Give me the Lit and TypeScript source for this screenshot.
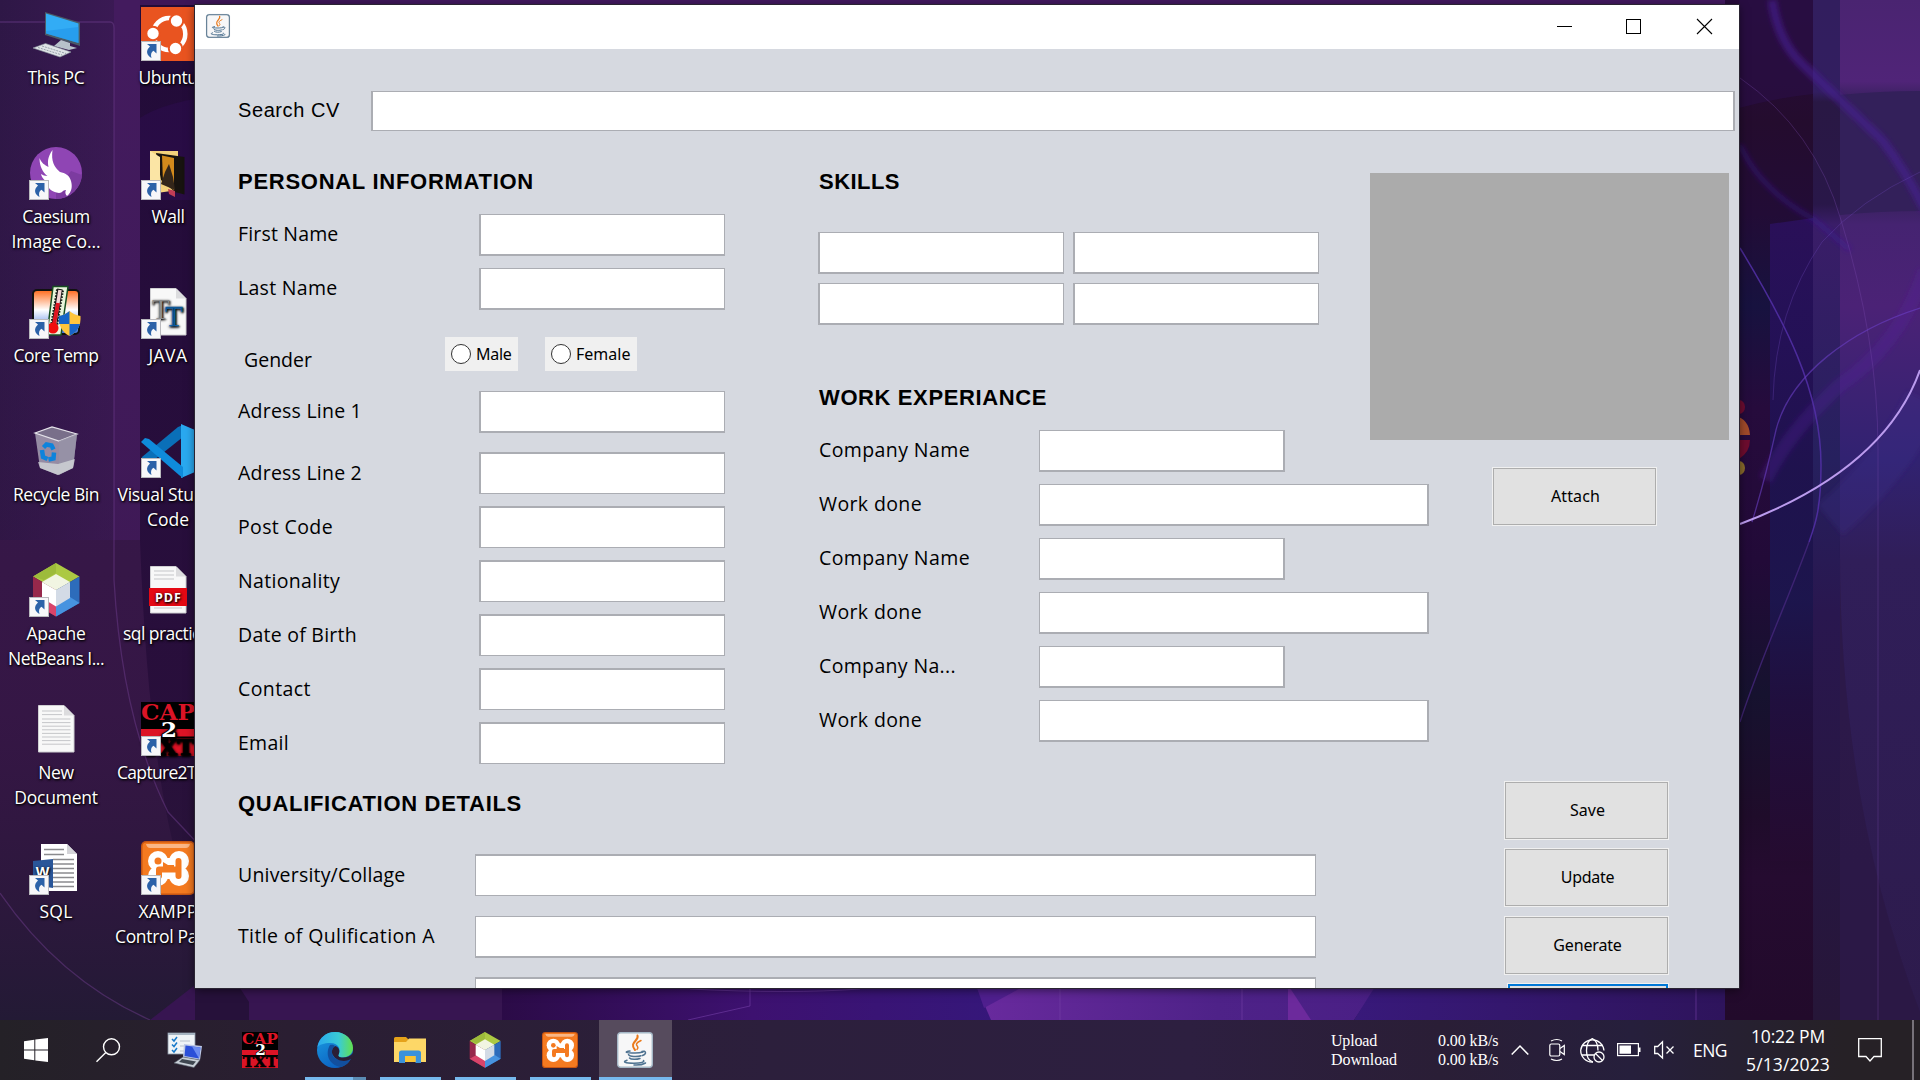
import { LitElement, html, css, svg, nothing, type TemplateResult } from "lit";
import { customElement, property } from "lit/decorators.js";

/** A run of text whose letter spacing is adjusted to reach a given advance width. */
@customElement("fit-text")
class FitText extends LitElement {
  @property() text = "";
  @property({ type: Number }) w = 0;
  static styles = css`
    :host { display: inline-block; white-space: pre; }
  `;
  render() {
    return html`${this.text}`;
  }
  updated() {
    if (!this.w) return;
    this.style.letterSpacing = "0px";
    const width = this.getBoundingClientRect().width;
    this.style.letterSpacing = `${((this.w - width) / this.text.length).toFixed(3)}px`;
  }
}

const t = (text: string, w = 0) => html`<fit-text .text=${text} .w=${w}></fit-text>`;

/* ---------- icons ---------- */
const badge = svg`<g><rect x=".5" y="34.5" width="19" height="19" fill="#f7f7f9" stroke="#b9b9bd"/>
  <path d="M6 37h9.500v9.500l-3-2.800c-2.500 1.500-3 4-2 7.300-4.500-2.500-6.500-7-1.500-11.500z" fill="#2c62a8"/></g>`;

const cube = svg`<path d="M27 0 50.500 13.500 27 27 4 13.500z" fill="#acc943"/><path d="M27 0v10L15 17 4 13.500z" fill="#9dbb3b"/>
  <path d="M4 13.500 27 27V53.500L4 40z" fill="#97284b"/><path d="M4 40l11-6 12 6.500v13z" fill="#d8446a"/>
  <path d="M50.500 13.500 27 27V53.500L50.500 40z" fill="#2d6cbb"/><path d="M50.500 40 41 34l-14 6.500v13z" fill="#4793e0"/>
  <path d="M27 11 41 19 27 27 13 19z" fill="#f1f5e2"/><path d="M13 19 27 27V43.500L13 35z" fill="#fff"/><path d="M41 19 27 27V43.500L41 35z" fill="#d3dbe6"/>`;

const cap = svg`<rect width="54" height="54" fill="#000"/><rect y="27" width="54" height="7.500" fill="#dc1426"/><rect y="36" width="54" height="18" fill="#dc1426"/>
  <g font-family="'DejaVu Serif'" font-weight="700" text-anchor="middle"><text x="27" y="17.500" font-size="23" textLength="54" lengthAdjust="spacingAndGlyphs" fill="#dc1426">CAP</text>
  <text x="27" y="53" font-size="22" textLength="52" lengthAdjust="spacingAndGlyphs" fill="#000" stroke="#000" stroke-width=".8">TXT</text>
  <text x="28" y="34.500" font-size="21" textLength="16" lengthAdjust="spacingAndGlyphs" fill="#fff" stroke="#000" stroke-width="2" paint-order="stroke">2</text></g>`;

const xampp = svg`<rect width="54" height="54" rx="5" fill="#c65513"/><rect x="1.500" y="1.500" width="51" height="51" rx="4" fill="#f47a20"/>
  <path d="M5 3h44q-1 4-4 4H9Q6 7 5 3z" fill="#fbc6a0" opacity=".8"/>
  <g fill="#fff"><circle cx="17" cy="20" r="10"/><circle cx="38" cy="20" r="10"/><circle cx="17" cy="35" r="10"/><circle cx="38" cy="35" r="10"/><rect x="14" y="17" width="27" height="21"/></g>
  <circle cx="17" cy="20" r="3.500" fill="#f47a20"/><path d="M18 35V28.500H37.500V20M37.500 35V28.500" fill="none" stroke="#f47a20" stroke-width="6" stroke-linecap="round" stroke-linejoin="round"/><path d="M22 21l5 3h6v3H22z" fill="#f47a20"/>`;

const java = svg`<rect x=".7" y=".7" width="34.600" height="34.600" rx="3" fill="#f7f7f8" stroke="#a4b7c6" stroke-width="1.400"/>
  <g fill="none" stroke-linecap="round"><path d="M20.500 3.500c2 5-9 7-2.500 14.500" stroke="#ea7a1c" stroke-width="2"/><path d="M24 8.500c-5 2.500-5.500 4-3.500 6 .8 1.200.3 2.300-.5 3" stroke="#ea7a1c" stroke-width="1.500"/>
  <g stroke="#4f7391" stroke-width="1.500"><path d="M13 19c-6 .8-5 2 5 2 4 0 6-.4 8-1"/><path d="M25 19.500c4-1.500 5 2.500.5 4"/><path d="M11.500 22.500c1 2.500 9 2.500 12.500 1.200"/><path d="M12.500 26c1.500 1.700 7 1.700 10.500.5"/><path d="M10 28.200c-5 1.500-2 3 7 3 7 0 11-1.200 9.500-2.700"/><path d="M17 33c5 .3 9-.5 11.500-2"/></g></g>`;

const doc = (inner: unknown) => svg`<path d="M9.500 3.500H35l10 10V50H9.500z" fill="#f8f8f8" stroke="#cfcfd2"/><path d="M35 3.500V13.500H45z" fill="#dcdcde"/>${inner}`;
const lines = (x1: number, x2: number, y: number, n: number, step: number) =>
  svg`<path d=${Array.from({ length: n }, (_, i) => `M${x1} ${y + i * step}H${x2}`).join("")} stroke="#c5c6c9" stroke-width="1"/>`;

const art: Record<string, TemplateResult> = {
  pc: svg`<path d="M16 5 51 15.500V39L16 28z" fill="#4a5a67"/><path d="M17 6.500 49.500 16.500V36L17 26.500z" fill="#32acf5"/><path d="M17 24 49.500 20v16L17 26.500z" fill="#1b8fe8" opacity=".5"/><path d="M32 33l9 3v3l7 2-8 2-15-4z" fill="#b7c2ca"/>
    <path d="M4 41 16.500 36.500 42 45 31 50z" fill="#dfe3e6" stroke="#8b979f" stroke-width=".6"/><path d="M9 40.500 33 48M13 39 37 46.500" stroke="#96a1a9" stroke-width="1" stroke-dasharray="2 1"/>`,
  ubuntu: svg`<rect width="60" height="54" fill="#e95420"/><circle cx="28.300" cy="27" r="16" fill="none" stroke="#fff" stroke-width="4.500"/><g fill="#fff" stroke="#e95420" stroke-width="2"><circle cx="35.500" cy="14" r="6.700"/><circle cx="12" cy="26.500" r="6.700"/><circle cx="34.500" cy="41.500" r="6.700"/></g>`,
  caesium: svg`<circle cx="27" cy="27" r="26" fill="#8f45b4"/><path d="M27 53a26 26 0 0 0 26-24L42 25 27 45z" fill="#7c3ba0"/><path d="M23.500 4c-5 7-5 12-4 17-4-2-7-4-9-9 0 8 3 14 8 18-3 0-4.500-1-6.500-2 1 5 5 7 8 9-3 5 3 9 10 10 4 0 3-3 7-3-1 2-1 4 1 6 5-4 5.500-10 4-15-1.500-6-6-8-11-9-6-5-9-11-7.500-22z" fill="#fff"/>`,
  wall: svg`<path d="M9 5H37V44L9 48z" fill="#f4d27c"/><path d="M15 7 43.500 11V48.500L34 46 20 34z" fill="#17130f"/><path d="M21 9.500 33 12v32l-11-8z" fill="#d28a1c"/><path d="M28 18l4 13 2 13-14-6 4-12z" fill="#33261a"/><path d="M27 43l7 2v6l-6-3z" fill="#c13d56"/><path d="M9 5 19 11V34L9 48z" fill="#fbe5a5"/>`,
  temp: svg`<defs><linearGradient id="ct" x2="0" y2="1"><stop stop-color="#ff6a1b"/><stop offset=".45" stop-color="#fff"/><stop offset="1" stop-color="#3b6fe0"/></linearGradient></defs>
    <rect x="4" y="5" width="46" height="44" rx="4" fill="url(#ct)" stroke="#111" stroke-width="2"/><path d="M24 1.500H39L32 50H18z" fill="#e9f5dc" stroke="#174f22" stroke-width="1.500"/><path d="M31 5 25 41" stroke="#111" stroke-width="8" stroke-dasharray="1.500 1.500"/><path d="M31 4 25 42" stroke="#111" stroke-width="5.500"/><path d="M31 5 25 42" stroke="#f2d5d5" stroke-width="3.500"/><path d="M29 18 24.500 42" stroke="#e01520" stroke-width="4"/><circle cx="24" cy="43" r="5.500" fill="#f00d0d"/>
    <path d="M30 31q6-1 10.500-5Q45 30 51.500 31q1 14-11 20Q29 45 30 31z" fill="#ffc53b"/><path d="M40.500 26v13H30q-1-4 0-8 6-1 10.500-5zM40.500 39H51q-2 8-10.500 12z" fill="#1765c8"/>`,
  font: doc(svg`<g font-family="'Liberation Serif'" font-size="29"><text x="11" y="34" fill="#8d8d8d">T</text><text x="24" y="41" fill="#1273c4" stroke="#1273c4" stroke-width=".5">T</text></g>`),
  bin: svg`<path d="M6 9 23 3 48 10 44 44 29 51 11 44z" fill="#b7b3c2" opacity=".75"/><path d="M6 9 23 3 48 10 30 17z" fill="#796f8a" stroke="#e4e2e9" stroke-width="1.200"/><path d="M30 17V51L44 44 48 10z" fill="#9692a6" opacity=".8"/><path d="M9 38l20 2 17-5-2 9-15 7-18-7z" fill="#dadfe0" opacity=".7"/>
    <g fill="none" stroke="#0d83dc" stroke-width="4.500"><path d="M14.500 23.500l3-3 5 1 2 4"/><path d="M13 26l1 7 4.500 2"/><path d="M19.500 35.500l5-1 .5-6"/></g>`,
  code: svg`<path d="M0 37l4 4 4-1L42 13V1L37 3 1 33z" fill="#0a6fb8"/><path d="M40 0 54 6V48L40 54z" fill="#2aa9f0"/><path d="M0 18 4 14 8 15 42 43V54L38 51z" fill="#0f8bdb"/>`,
  cube,
  pdf: doc(svg`${lines(13, 33, 8, 3, 4)}${lines(13, 41, 45, 1, 4)}<rect x="8" y="25" width="38" height="18" fill="#e50914"/><text x="27.500" y="38.500" text-anchor="middle" font-family="'Open Sans'" font-weight="700" font-size="12.500" letter-spacing="1" fill="#fff">PDF</text>`),
  doc: doc(svg`${lines(13, 33, 9, 2, 3.6)}${lines(13, 41.500, 17, 8, 3.6)}`),
  cap,
  word: svg`<path d="M12 3H38l10 10V50H12z" fill="#fff"/><path d="M38 3V13H48z" fill="#d4d4d8"/><path d="M15 8.500H35M15 13.500H35M24 18.500H45M24 23H45M24 27.500H45M24 32H45M24 36.500H45M24 41H45M24 45.500H45" stroke="#8b8b8e" stroke-width="1.600"/><path d="M4 20 24 18V47L4 44z" fill="#2a5699"/><text x="13.500" y="36" text-anchor="middle" font-family="'Open Sans'" font-weight="700" font-size="14" fill="#fff">W</text>`,
  xampp,
};

type Desk = { icon: string; link: boolean; label: [string, number][] };
const desk: Desk[] = [
  { icon: "pc", link: false, label: [["This PC", 57]] },
  { icon: "caesium", link: true, label: [["Caesium", 67.5], ["Image Co...", 89]] },
  { icon: "temp", link: true, label: [["Core Temp", 85]] },
  { icon: "bin", link: false, label: [["Recycle Bin", 86]] },
  { icon: "cube", link: true, label: [["Apache", 59], ["NetBeans I...", 96]] },
  { icon: "doc", link: false, label: [["New", 35.5], ["Document", 83.5]] },
  { icon: "word", link: true, label: [["SQL", 33]] },
  { icon: "ubuntu", link: true, label: [["Ubuntu", 59]] },
  { icon: "wall", link: true, label: [["Wall", 33]] },
  { icon: "font", link: true, label: [["JAVA", 39]] },
  { icon: "code", link: true, label: [["Visual Studio", 101], ["Code", 42]] },
  { icon: "pdf", link: false, label: [["sql practical", 90]] },
  { icon: "cap", link: true, label: [["Capture2Text", 102]] },
  { icon: "xampp", link: true, label: [["XAMPP", 59], ["Control Panel", 106]] },
];

const wallpaper = html`<svg class="wallpaper" width="1920" height="1080" viewBox="0 0 1920 1080">
  <defs>
    <linearGradient id="lg" x2="1" y2="0"><stop stop-color="#2e1746"/><stop offset="1" stop-color="#3d1a57"/></linearGradient>
    <linearGradient id="lv" x2="0" y2="1"><stop stop-color="#3b1852" stop-opacity="0"/><stop offset=".7" stop-color="#32143f" stop-opacity=".4"/><stop offset="1" stop-color="#231a35"/></linearGradient>
    <linearGradient id="bt"><stop stop-color="#2b0b47"/><stop offset=".5" stop-color="#3d1170"/><stop offset="1" stop-color="#35177a"/></linearGradient>
    <linearGradient id="b2"><stop stop-color="#692a9e"/><stop offset=".6" stop-color="#4e2288"/><stop offset="1" stop-color="#4a1f85"/></linearGradient>
    <linearGradient id="b3"><stop stop-color="#38197a"/><stop offset="1" stop-color="#2e145c"/></linearGradient>
    <linearGradient id="r1" gradientUnits="userSpaceOnUse" x1="0" y1="0" x2="0" y2="1020"><stop stop-color="#270b3b"/><stop offset=".12" stop-color="#240c2e"/><stop offset=".21" stop-color="#220c36"/><stop offset=".3" stop-color="#17123f"/><stop offset=".4" stop-color="#260b3c"/><stop offset=".55" stop-color="#220a38"/><stop offset=".68" stop-color="#16122f"/><stop offset=".8" stop-color="#1f0c2a"/><stop offset=".86" stop-color="#250b30"/><stop offset="1" stop-color="#220a2b"/></linearGradient>
    <linearGradient id="r2" gradientUnits="userSpaceOnUse" x1="0" y1="212" x2="0" y2="861"><stop stop-color="#2b105c"/><stop offset=".2" stop-color="#251159"/><stop offset=".4" stop-color="#1e1350"/><stop offset=".6" stop-color="#1c164f"/><stop offset=".75" stop-color="#210f40"/><stop offset="1" stop-color="#250b30"/></linearGradient>
    <linearGradient id="r3" gradientUnits="userSpaceOnUse" x1="0" y1="0" x2="0" y2="1020"><stop stop-color="#321e5e"/><stop offset=".09" stop-color="#321e60"/><stop offset=".1" stop-color="#291844"/><stop offset=".2" stop-color="#291749"/><stop offset=".22" stop-color="#3a1d68"/><stop offset=".45" stop-color="#26205e"/><stop offset=".6" stop-color="#29174f"/><stop offset="1" stop-color="#261638"/></linearGradient>
    <linearGradient id="r4" gradientUnits="userSpaceOnUse" x1="0" y1="0" x2="0" y2="1020"><stop stop-color="#4a2471"/><stop offset=".08" stop-color="#502478"/><stop offset=".1" stop-color="#34205a"/><stop offset=".19" stop-color="#342158"/><stop offset=".22" stop-color="#452371"/><stop offset=".3" stop-color="#4b2276"/><stop offset=".45" stop-color="#312271"/><stop offset=".55" stop-color="#301e59"/><stop offset="1" stop-color="#2d1b4c"/></linearGradient>
    <filter id="soft" x="-50%" y="-20%" width="200%" height="140%"><feGaussianBlur stdDeviation="2.500"/></filter>
  </defs>
  <rect width="1920" height="1080" fill="#220b38"/>
  <rect width="140" height="1020" fill="url(#lg)"/>
  <rect x="114" width="26" height="1020" fill="#431b5e"/>
  <path d="M140 0H400V5H140z" fill="#3d1657"/>
  <path d="M140 118Q160 105 195 99V200H140z" fill="#2c0c4c" opacity=".6"/>
  <path d="M140 540Q148 760 180 870L250 1020H0V540z" fill="#371849"/>
  <rect width="195" height="1020" fill="url(#lv)"/>
  <path d="M0 22H110q4 0 4 6V580Q122 720 168 812L200 846M0 893Q60 980 150 1020" fill="none" stroke="#6b3b8a" stroke-opacity=".5" stroke-width="1.300"/>
  <path d="M195 985H502V1020H150z" fill="#371551"/>
  <path d="M238 985l11 17v18h-10zM195 985h43l10 35H195z" fill="#26113a"/>
  <rect x="400" width="1325" height="5" fill="#42195f"/>
  <rect x="502" y="985" width="500" height="35" fill="url(#bt)"/>
  <path d="M976 985H1378L1354 1020H991z" fill="url(#b2)"/>
  <path d="M1288 985l23 35h-23z" fill="#6c2a9c"/>
  <path d="M976 985H1026L984 1008z" fill="#4f1f8e"/>
  <path d="M1376 985H1725V1020H1354z" fill="url(#b3)"/>
  <path d="M690 989q100 5 170 0M750 985V1006L688 1020M1060 985V1020M1242 985V1020M1696 985V1020" fill="none" stroke="#7440a8" stroke-opacity=".6"/>
  <rect x="1725" width="88" height="1020" fill="url(#r1)"/>
  <path d="M1739 108Q1775 98 1813 94V0H1739z" fill="#290e45" opacity=".7"/>
  <path d="M1770 224L1813 218V861H1770z" fill="url(#r2)" opacity=".9"/>
  <rect x="1813" width="27" height="1020" fill="url(#r3)"/>
  <rect x="1840" width="80" height="1020" fill="url(#r4)"/>
  <path d="M1840 95Q1880 91 1920 91V211Q1880 211 1840 215z" fill="#33205a"/>
  <path d="M1840 540Q1838 800 1920 1012V1020H1840z" fill="#29163f" opacity=".55"/>
  <g fill="none" filter="url(#soft)">
    <path d="M1772 0Q1778 40 1800 62L1882 140Q1905 170 1925 210" stroke="#4a1c96" stroke-width="9" opacity=".6"/>
    <path d="M1740 145Q1760 190 1815 220L1850 250" stroke="#3b18a0" stroke-width="5" opacity=".4"/>
    <path d="M1925 270Q1900 345 1840 385Q1790 430 1765 480" stroke="#5a23a0" stroke-width="14" opacity=".28"/>
    <path d="M1925 400Q1890 470 1830 520" stroke="#3b2a90" stroke-width="40" opacity=".25"/>
  </g>
  <g fill="none">
    <path d="M1740 78Q1815 130 1841 220Q1878 340 1878 450V1020" stroke="#7d4bb2" stroke-opacity=".32"/>
    <path d="M1920 172Q1860 200 1822 242Q1775 310 1773 400" stroke="#6a46b4" stroke-opacity=".35"/>
    <path d="M1740 248C1785 322 1821 390 1821 465C1821 510 1815 525 1809 542" stroke="#5430a8" stroke-width="1.500" stroke-opacity=".85"/>
    <path d="M1809 542C1790 595 1760 660 1740 722" stroke="#45277c" stroke-width="1.400" stroke-opacity=".8"/>
    <path d="M1920 308C1850 330 1790 375 1776 430Q1765 480 1752 522" stroke="#6a40c4" stroke-opacity=".6" stroke-width="1.300"/>
    <path d="M1740 524C1830 490 1895 440 1920 370" stroke="#bb9bee" stroke-width="2"/>
  </g>
  <ellipse cx="1739" cy="407" rx="6" ry="7" fill="#6d0c31"/><path d="M1735 416q14 3 15 19h-15z" fill="#a04a2a"/><path d="M1735 440h15q0 12-11 19h-4z" fill="#6d0c2e"/><ellipse cx="1739" cy="468" rx="6" ry="7" fill="#8a6a2c"/>
</svg>`;

@customElement("app-root")
class AppRoot extends LitElement {
  static styles = css`
    :host { display: block; position: relative; width: 1920px; height: 1080px; overflow: hidden; font-family: "Open Sans", "Noto Sans", sans-serif; color: #000; }
    * { box-sizing: border-box; }
    svg { display: block; flex: none; overflow: visible; }
    .screen { display: flex; flex-direction: column; height: 1080px; }
    .wallpaper { position: absolute; left: 0; top: 0; overflow: hidden; }

    .desktop { position: relative; flex: 1; display: grid; grid-template-rows: repeat(7, 139px); grid-auto-columns: 112px; grid-auto-flow: column; align-content: start; padding-top: 7px; }
    .shortcut { display: flex; flex-direction: column; align-items: center; color: #fff; font-size: 17.5px; line-height: 25px; text-shadow: 1px 1px 2px #000, 0 1px 3px rgba(0,0,0,.8); }
    .shortcut svg { margin-bottom: 4px; }

    .window { position: absolute; left: 195px; top: 5px; width: 1544px; height: 983px; display: flex; flex-direction: column; background: #d6d9e0; box-shadow: 0 0 0 1px #2a2432, 0 2px 9px rgba(0,0,0,.55); }
    .titlebar { display: flex; height: 44px; background: #fff; padding-left: 11px; flex: none; justify-content: space-between; }
    .titlebar .app { margin-top: 9px; }
    .controls { padding: 14px 27px 0 0; display: flex; gap: 54px; }
    .controls .close { margin-left: 2px; }
    .client { flex: 1; min-height: 0; overflow: hidden; padding-top: 42px; }
    .search { display: flex; height: 40px; padding: 0 4px 0 43px; font-family: "Liberation Sans", Arial, sans-serif; font-size: 20px; line-height: 38px; }
    .search .label { width: 133px; flex: none; }
    .field { background: #fff; border: 1px solid #abadb3; flex: none; width: 246px; height: 42px; }
    .search .field { flex: 1; height: 40px; border-width: 1px 2px; }
    .lb { border-width: 1px 1px 2px 2px; }
    .lt { border-width: 2px 1px 1px 2px; }
    .rb { border-width: 1px 2px 2px 1px; }
    .tp { border-width: 2px 1px 1px 1px; }
    .bt { border-width: 1px 1px 2px 1px; }
    .main { display: flex; padding-left: 43px; }
    .left { width: 1132px; flex: none; }
    .cols { display: flex; height: 633px; }
    .colA { width: 580px; flex: none; display: flex; flex-direction: column; }
    .colB { width: 552px; flex: none; }
    .colB h2, .colB .label { padding-left: 1px; }
    h2 { margin: 0; font-family: "Liberation Sans", Arial, sans-serif; font-weight: 700; font-size: 22px; line-height: 32px; height: 30px; }
    .colA h2, .colB h2 { margin-top: 35px; }
    .colB h2.work { margin-top: 57px; margin-bottom: 18px; }
    .colA h2 { margin-bottom: 18px; }
    .row { display: flex; height: 42px; margin-bottom: 12px; font-size: 19.5px; line-height: 40px; }
    .row.low { line-height: 42px; }
    .row.loose { margin-bottom: 19px; }
    .row .label { width: 241px; flex: none; }
    .colB .row .label { width: 221px; }
    .colB .wide { width: 390px; }
    .gender { display: flex; height: 34px; margin: 15px 0 20px; font-size: 19.5px; }
    .gender .label { width: 201px; margin-left: 6px; line-height: 46px; }
    .radio { display: flex; align-items: center; background: #f0f0f0; height: 34px; padding-left: 6px; gap: 5px; font: 16px "Noto Sans", sans-serif; width: 73px; margin-right: 27px; }
    .radio + .radio { width: 92px; }
    .dot { width: 20px; height: 20px; border: 1px solid #333; border-radius: 50%; background: #fff; flex: none; }
    .skills { display: grid; grid-template-columns: 246px 246px; gap: 9px; margin-top: 36px; }
    .qual h2 { margin-top: 24px; margin-bottom: 36px; }
    .qual .row { margin-bottom: 20px; }
    .qual .row + .row { margin-bottom: 19px; }
    .qual .row .label { width: 237px; }
    .qual .field { width: 841px; }
    .side { width: 369px; padding-top: 42px; display: flex; flex-direction: column; }
    .photo { width: 359px; height: 267px; background: #ababab; }
    .btn { width: 163px; height: 57px; background: #e1e1e1; border: 1px solid #adadad; box-shadow: 0 0 0 1px #f0f0f0; display: flex; align-items: center; justify-content: center; font: 16px "Noto Sans", sans-serif; padding: 0 0 2px 2px; }
    .btn.attach { margin: 28px 0 0 123px; }
    .stack { display: flex; flex-direction: column; gap: 10px; margin: 257px 0 0 135px; }
    .stack .btn:nth-child(3) { margin-top: 1px; }
    .stack .btn.focus { width: 160px; margin-left: 3px; border: 2px solid #0078d7; }

    .taskbar { position: relative; height: 60px; flex: none; display: flex; justify-content: space-between; color: #fff; background: linear-gradient(90deg, #242127 0, #2a1e32 15%, #2c1f3c 40%, #2d1f40 62%, #2a1e36 75%, #261f3c 85%, #262126 96%, #262126 100%); }
    .apps { display: flex; }
    .tile { display: flex; align-items: center; justify-content: center; width: 75px; height: 60px; }
    .tile.start { width: 72px; }
    .tile.find { width: 72px; }
    .tile.task { width: 82px; }
    .tile.cap { width: 68px; }
    .tile.run { flex-direction: column; width: 61px; margin-left: 14px; border-bottom: 3px solid #76b9ed; padding-top: 3px; padding-right: 1px; }
    .tile.run.edge { width: 61px; margin-left: 11px; border-image: linear-gradient(90deg, #76b9ed 47px, #5b8cb4 47px) 1; border-width: 0 0 3px; border-style: solid; }
    .tile.run.active { width: 73px; margin-left: 8px; background: #564b5d; padding-right: 2px; }
    .tray { display: flex; align-items: center; height: 60px; }
    .net { font: 16px/19px "Liberation Serif", serif; display: grid; grid-template-columns: 107px 61px; padding-bottom: 1px; margin-right: 12px; }
    .i1 { margin-right: 20px; } .i2 { margin-right: 15px; } .i3 { margin-right: 12px; } .i4 { margin-right: 13px; } .i5 { margin-right: 19px; }
    .lang { font-size: 17.5px; width: 34px; margin-right: 19px; }
    .clock { font-size: 17.5px; line-height: 28px; width: 84px; margin-right: 28px; display: flex; flex-direction: column; align-items: center; }
    .peek { width: 2px; height: 60px; background: #77727a; margin: 0 6px 0 30px; }
  `;

  row(label: string, w: number, edge: string, extra = "", wide = "") {
    return html`<div class="row ${extra}"><div class="label">${t(label, w)}</div><div class="field ${edge} ${wide}"></div></div>`;
  }

  renderDesktop() {
    return html`<div class="desktop">
      ${desk.map((d) => html`<div class="shortcut">
        <svg width="54" height="54" viewBox="0 0 54 54">${art[d.icon]}${d.link ? badge : nothing}</svg>
        ${d.label.map(([s, w]) => t(s, w))}
      </div>`)}
    </div>`;
  }

  renderWindow() {
    return html`<div class="window">
      <div class="titlebar">
        <svg class="app" width="24" height="24" viewBox="0 0 36 36">${java}<rect x="1" y="1" width="34" height="34" rx="4" fill="none" stroke="#5e7a90" stroke-width="1.600"/></svg>
        <div class="controls">
          <svg width="15" height="16" viewBox="0 0 15 16"><path d="M0 7.500H15" stroke="#000"/></svg>
          <svg width="15" height="16" viewBox="0 0 15 16"><rect x=".5" y=".5" width="14" height="14" fill="none" stroke="#000"/></svg>
          <svg class="close" width="15" height="16" viewBox="0 0 15 16"><path d="M0 0 15 15M15 0 0 15" stroke="#000" stroke-width="1.100"/></svg>
        </div>
      </div>
      <div class="client">
        <div class="search"><div class="label">${t("Search CV", 102)}</div><div class="field"></div></div>
        <div class="main">
          <div class="left">
            <div class="cols">
              <div class="colA">
                <h2>${t("PERSONAL INFORMATION", 296)}</h2>
                ${this.row("First Name", 100.5, "lb")}
                ${this.row("Last Name", 99.5, "lb")}
                <div class="gender"><div class="label">${t("Gender", 68)}</div>
                  <div class="radio"><span class="dot"></span>${t("Male", 35.5)}</div>
                  <div class="radio"><span class="dot"></span>${t("Female", 54.5)}</div>
                </div>
                ${this.row("Adress Line 1", 124, "lb", "loose")}
                ${this.row("Adress Line 2", 124, "lt", "low")}
                ${this.row("Post Code", 95, "lt", "low")}
                ${this.row("Nationality", 102, "lt", "low")}
                ${this.row("Date of Birth", 119, "lt", "low")}
                ${this.row("Contact", 73, "lt", "low")}
                ${this.row("Email", 51, "lt", "low")}
              </div>
              <div class="colB">
                <h2>${t("SKILLS", 81)}</h2>
                <div class="skills">${[0, 1, 2, 3].map(() => html`<div class="field lb"></div>`)}</div>
                <h2 class="work">${t("WORK EXPERIANCE", 228)}</h2>
                ${["Company Name", "Work done", "Company Name", "Work done", "Company Na...", "Work done"].map((s, i) =>
                  this.row(s, i % 2 ? 103 : i === 4 ? 137 : 151, "rb", "", i % 2 ? "wide" : ""))}
              </div>
            </div>
            <div class="qual">
              <h2>${t("QUALIFICATION DETAILS", 284)}</h2>
              ${this.row("University/Collage", 167.5, "tp", "low")}
              ${this.row("Title of Qulification A", 197, "bt")}
              ${this.row("", 0, "tp")}
            </div>
          </div>
          <div class="side">
            <div class="photo"></div>
            <div class="btn attach">${t("Attach", 49)}</div>
            <div class="stack">
              <div class="btn">${t("Save", 35)}</div>
              <div class="btn">${t("Update", 53.5)}</div>
              <div class="btn">${t("Generate", 68.5)}</div>
              <div class="btn focus"></div>
            </div>
          </div>
        </div>
      </div>
    </div>`;
  }

  renderTaskbar() {
    return html`<div class="taskbar">
      <div class="apps">
        <div class="tile start"><svg width="24" height="24" viewBox="0 0 24 24"><path d="M0 3.300 10.300 1.800V11.500H0zM11.300 1.600 24 0V11.500H11.300zM0 12.500H10.300V22.200L0 20.700zM11.300 12.500H24V24L11.300 22.400z" fill="#fff"/></svg></div>
        <div class="tile find"><svg width="24" height="24" viewBox="0 0 24 24"><g fill="none" stroke="#fff" stroke-width="1.400"><circle cx="15.500" cy="8.800" r="8"/><path d="M9.800 14.600.5 23.700"/></g></svg></div>
        <div class="tile task"><svg width="34" height="35" viewBox="0 0 34 35"><rect width="27" height="21" fill="#eff3f7" stroke="#8a97a7" stroke-width=".8"/><rect width="27" height="2" fill="#a6b4c2"/><path d="M4 6l2 2 3-4M4 11.500l2 2 3-4M4 17l2 2 3-4" fill="none" stroke="#1879c9" stroke-width="1.500"/><path d="M12 8H22M12 13H20M12 18H17" stroke="#b9c2cc"/><path d="M16 11 34 13 32 27 15 24z" fill="#bcc7e6"/><path d="M17.500 12.500 32.500 14.500 31 25.500 16.500 23z" fill="#2b4fd8"/><path d="M24 13.500l8.500 1L31 25.500z" fill="#6c8cf0"/><path d="M15 24 32 27 26 34.500 6 30z" fill="#c9d0d8" stroke="#59636e" stroke-width=".6"/><path d="M14 26 28 28.500 25 32 11 29z" fill="#3e4650"/></svg></div>
        <div class="tile cap"><svg width="36" height="36" viewBox="0 0 54 54">${cap}</svg></div>
        <div class="tile run edge"><svg width="36" height="36" viewBox="0 0 36 36"><defs>
            <linearGradient id="e1"><stop stop-color="#2aa8ee"/><stop offset=".6" stop-color="#3acbd6"/><stop offset="1" stop-color="#63e04c"/></linearGradient>
            <linearGradient id="e2" x2=".6" y2="1"><stop stop-color="#1b9de2"/><stop offset="1" stop-color="#0b5fc0"/></linearGradient></defs>
            <circle cx="18" cy="18" r="18" fill="url(#e2)"/><path d="M.5 15C2 6 9 0 18 0 29 0 36 8 36 16c0 6-5 9.500-10 9.500-4 0-5.500-1.500-4.300-3.200C24 18 22 11 13.500 11 7 11 2 13 .5 15z" fill="url(#e1)"/>
            <path d="M13 13c-5 8-2 20 11 22 4-1 8-4 9.500-7.500.3-.8-.4-.8-1-.4C24 31 14 27 15 19c.2-2.500 1.500-4 3-5-1.500-1.500-3.500-1.500-5-1z" fill="#124f9e"/>
            <path d="M34.500 26.500C28 31.500 17 28.500 15 21c-.5-3 1-6 3.500-7 4 1.500 4.500 5.500 3.200 8.300C20.500 24 22 25.500 26 25.500c4 0 7.500-1.500 10-4.500l1 5z" fill="#2b1e35"/></svg></div>
        <div class="tile run"><svg width="32" height="28" viewBox="0 0 32 28"><path d="M0 2.500Q0 1 1.500 1H12l2.500 2.500L12 7H0z" fill="#e5a21a"/><path d="M0 6H12l3-3.500H32V26H0z" fill="#fdd767"/><path d="M5 27V17q0-2.500 2.500-2.500h17Q27 14.500 27 17V27H21.500V20H11V27z" fill="#3a92dc"/><path d="M11 20H21.500V26H11z" fill="#f9c435"/></svg></div>
        <div class="tile run"><svg width="36" height="36" viewBox="0 0 54 54">${cube}</svg></div>
        <div class="tile run"><svg width="36" height="36" viewBox="0 0 54 54">${xampp}</svg></div>
        <div class="tile run active"><svg width="36" height="36" viewBox="0 0 36 36">${java}</svg></div>
      </div>
      <div class="tray">
        <div class="net"><span>${t("Upload", 46)}</span><span>${t("0.00 kB/s", 60.5)}</span><span>${t("Download", 66)}</span><span>${t("0.00 kB/s", 60.5)}</span></div>
        <svg class="i1" width="18" height="10" viewBox="0 0 18 10"><path d="M.7 9.500 9 1l8.300 8.500" fill="none" stroke="#fff" stroke-width="1.500"/></svg>
        <svg class="i2" width="16" height="22" viewBox="0 0 16 22"><g fill="none" stroke="#fff" stroke-width="1.200"><rect x=".8" y="5" width="10" height="12" rx="1.500"/><path d="M11 9.500l4.300-3V15.500L11 12.500M2 2Q8-1 13 2M2 20Q8 23 13 20"/></g></svg>
        <svg class="i3" width="25" height="25" viewBox="0 0 25 25"><g fill="none" stroke="#fff" stroke-width="1.300"><path d="M13 24C6 24.500.7 19 .7 12.300A11.700 11.700 0 0 1 24 12.500"/><path d="M13 24Q6.500 22 6.500 12.500T12.300.7Q18 3 18 12.500M2 7.500H23M2 17H14"/><circle cx="19" cy="19" r="5"/><path d="M15.500 15.500l7 7"/></g></svg>
        <svg class="i4" width="24" height="14" viewBox="0 0 24 14"><rect x=".6" y=".6" width="20.800" height="12" fill="none" stroke="#fff" stroke-width="1.200"/><path d="M2.500 2.500h11.500v8.300H2.500zM22 4.500h1.500v4.500H22z" fill="#fff"/></svg>
        <svg class="i5" width="20" height="18" viewBox="0 0 20 18"><path d="M.7 5.500h3L8.500.8V17L3.700 12.500h-3zM12.500 5.500l7 7M19.500 5.500l-7 7" fill="none" stroke="#fff" stroke-width="1.300"/></svg>
        <div class="lang">${t("ENG", 34)}</div>
        <div class="clock">${t("10:22 PM", 74)}${t("5/13/2023", 84)}</div>
        <svg width="24" height="24" viewBox="0 0 24 24"><path d="M.7.7H23.300V18.500H16L12 23 8 18.500H.7z" fill="none" stroke="#fff" stroke-width="1.300"/></svg>
        <div class="peek"></div>
      </div>
    </div>`;
  }

  render() {
    return html`${wallpaper}<div class="screen">${this.renderDesktop()}${this.renderTaskbar()}</div>${this.renderWindow()}`;
  }
}
